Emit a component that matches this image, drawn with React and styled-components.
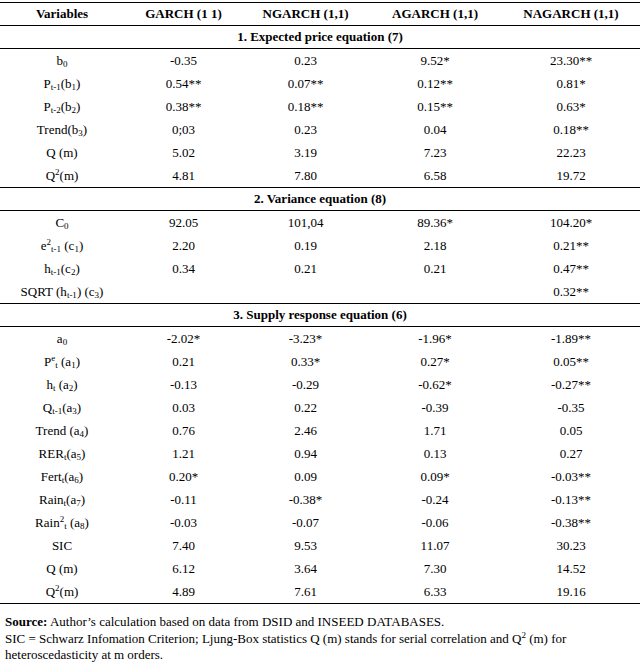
import React from 'react';
import styled, { createGlobalStyle } from 'styled-components';

const GlobalStyle = createGlobalStyle`
  body {
    margin: 0;
    background: #fff;
    color: #000;
    font-family: "Liberation Serif", "Times New Roman", serif;
  }
`;

const Page = styled.div`
  width: 640px;
  padding-top: 2px;
`;

const Table = styled.table`
  width: 640px;
  border-collapse: collapse;
  table-layout: fixed;
  font-size: 13px;
`;

const HeadCell = styled.th`
  height: 22px;
  padding: 0;
  font-weight: bold;
  text-align: center;
  border-top: 1px solid #000;
  border-bottom: 1px solid #000;
`;

const SectionCell = styled.td`
  height: 22px;
  padding: 0;
  font-weight: bold;
  text-align: center;
  border-top: ${p => (p.$first ? 'none' : '1px solid #000')};
  border-bottom: 1px solid #000;
`;

const Cell = styled.td`
  height: 23px;
  padding: 0;
  text-align: center;
  white-space: nowrap;
  border-bottom: ${p => (p.$last ? '1px solid #000' : 'none')};
`;

const Sub = styled.sub`
  font-size: 9px;
  vertical-align: -2px;
  line-height: 0;
`;

const Sup = styled.sup`
  font-size: 9px;
  vertical-align: 5px;
  line-height: 0;
`;

const Notes = styled.div`
  padding: 10px 0 0 5px;
  font-size: 13px;
  line-height: 16.5px;
`;

const cols = [124, 119, 125, 134, 138];

const sections = [
  {
    title: '1. Expected price equation (7)',
    rows: [
      [<>b<Sub>0</Sub></>, '-0.35', '0.23', '9.52*', '23.30**'],
      [<>P<Sub>t-1</Sub>(b<Sub>1</Sub>)</>, '0.54**', '0.07**', '0.12**', '0.81*'],
      [<>P<Sub>t-2</Sub>(b<Sub>2</Sub>)</>, '0.38**', '0.18**', '0.15**', '0.63*'],
      [<>Trend(b<Sub>3</Sub>)</>, '0;03', '0.23', '0.04', '0.18**'],
      ['Q (m)', '5.02', '3.19', '7.23', '22.23'],
      [<>Q<Sup>2</Sup>(m)</>, '4.81', '7.80', '6.58', '19.72'],
    ],
  },
  {
    title: '2. Variance equation (8)',
    rows: [
      [<>C<Sub>0</Sub></>, '92.05', '101,04', '89.36*', '104.20*'],
      [<>e<Sup>2</Sup><Sub>t-1</Sub> (c<Sub>1</Sub>)</>, '2.20', '0.19', '2.18', '0.21**'],
      [<>h<Sub>t-1</Sub>(c<Sub>2</Sub>)</>, '0.34', '0.21', '0.21', '0.47**'],
      [<>SQRT (h<Sub>t-1</Sub>) (c<Sub>3</Sub>)</>, '', '', '', '0.32**'],
    ],
  },
  {
    title: '3. Supply response equation (6)',
    rows: [
      [<>a<Sub>0</Sub></>, '-2.02*', '-3.23*', '-1.96*', '-1.89**'],
      [<>P<Sup>e</Sup><Sub>t</Sub> (a<Sub>1</Sub>)</>, '0.21', '0.33*', '0.27*', '0.05**'],
      [<>h<Sub>t</Sub> (a<Sub>2</Sub>)</>, '-0.13', '-0.29', '-0.62*', '-0.27**'],
      [<>Q<Sub>t-1</Sub>(a<Sub>3</Sub>)</>, '0.03', '0.22', '-0.39', '-0.35'],
      [<>Trend (a<Sub>4</Sub>)</>, '0.76', '2.46', '1.71', '0.05'],
      [<>RER<Sub>t</Sub>(a<Sub>5</Sub>)</>, '1.21', '0.94', '0.13', '0.27'],
      [<>Fert<Sub>t</Sub>(a<Sub>6</Sub>)</>, '0.20*', '0.09', '0.09*', '-0.03**'],
      [<>Rain<Sub>t</Sub>(a<Sub>7</Sub>)</>, '-0.11', '-0.38*', '-0.24', '-0.13**'],
      [<>Rain<Sup>2</Sup><Sub>t</Sub> (a<Sub>8</Sub>)</>, '-0.03', '-0.07', '-0.06', '-0.38**'],
      ['SIC', '7.40', '9.53', '11.07', '30.23'],
      ['Q (m)', '6.12', '3.64', '7.30', '14.52'],
      [<>Q<Sup>2</Sup>(m)</>, '4.89', '7.61', '6.33', '19.16'],
    ],
  },
];

const App = () => (
  <Page>
    <GlobalStyle />
    <Table>
      <colgroup>
        {cols.map((w, i) => <col key={i} style={{ width: w }} />)}
      </colgroup>
      <thead>
        <tr>
          <HeadCell>Variables</HeadCell>
          <HeadCell>GARCH (1 1)</HeadCell>
          <HeadCell>NGARCH (1,1)</HeadCell>
          <HeadCell>AGARCH (1,1)</HeadCell>
          <HeadCell>NAGARCH (1,1)</HeadCell>
        </tr>
      </thead>
      {sections.map((sec, si) => (
        <tbody key={si}>
          <tr>
            <SectionCell colSpan={5} $first={si === 0}>{sec.title}</SectionCell>
          </tr>
          {sec.rows.map((row, ri) => (
            <tr key={ri}>
              {row.map((c, ci) => (
                <Cell key={ci} $last={ri === sec.rows.length - 1}>{c}</Cell>
              ))}
            </tr>
          ))}
        </tbody>
      ))}
    </Table>
    <Notes>
      <b>Source:</b> Author’s calculation based on data from DSID and INSEED DATABASES.
      <br />
      SIC = Schwarz Infomation Criterion; Ljung-Box statistics Q (m) stands for serial correlation and Q<Sup>2</Sup> (m) for
      <br />
      heteroscedasticity at m orders.
    </Notes>
  </Page>
);

export default App;
